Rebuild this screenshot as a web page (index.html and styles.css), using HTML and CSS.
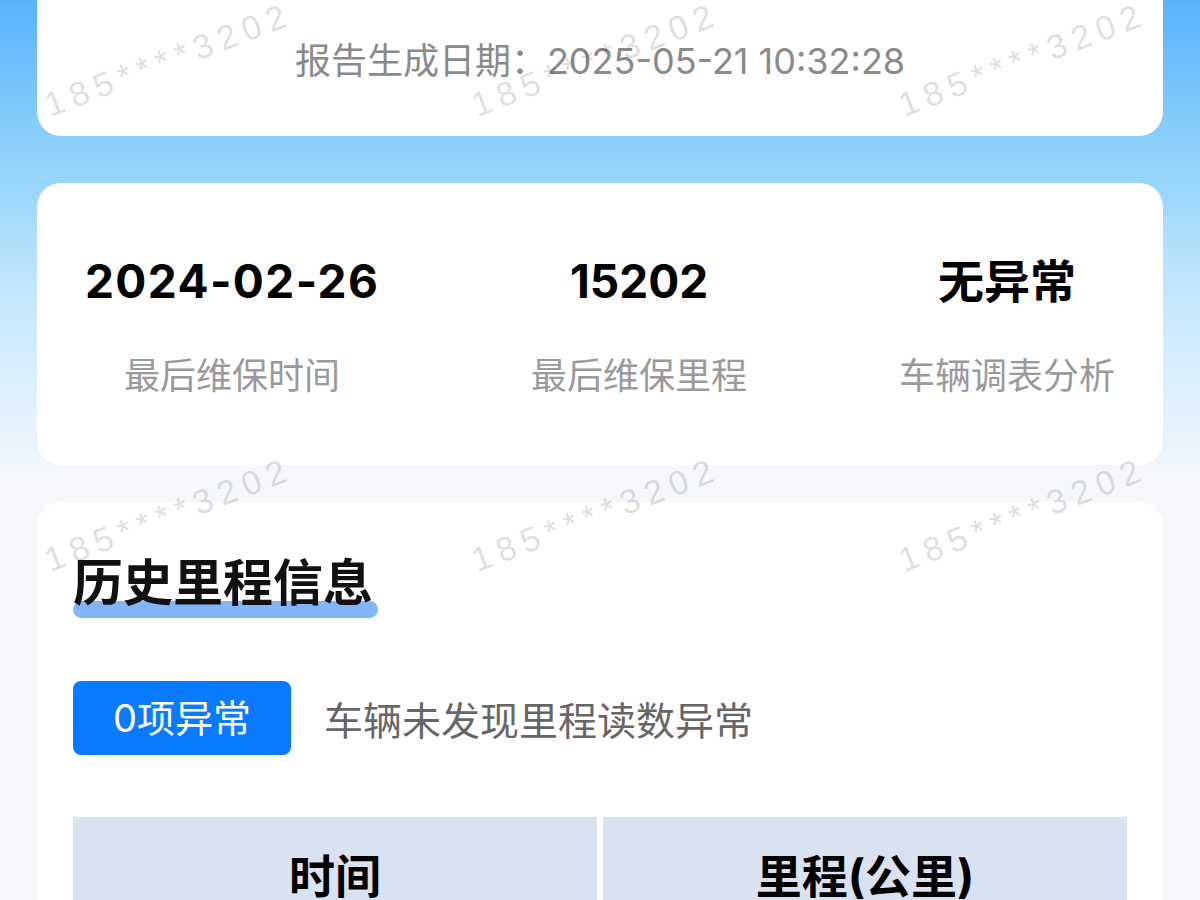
FILE: index.html
```html
<!DOCTYPE html>
<html lang="zh-CN">
<head>
<meta charset="utf-8">
<title>历史里程信息</title>
<link rel="stylesheet" href="styles.css">
</head>
<body>
<div class="page">
  <section class="hero">
    <div class="card card-date">报告生成日期：2025-05-21 10:32:28</div>
    <div class="card card-stats">
      <div class="stat">
        <div class="stat-value stat-date">2024-02-26</div>
        <div class="stat-label">最后维保时间</div>
      </div>
      <div class="stat">
        <div class="stat-value">15202</div>
        <div class="stat-label">最后维保里程</div>
      </div>
      <div class="stat">
        <div class="stat-value">无异常</div>
        <div class="stat-label">车辆调表分析</div>
      </div>
    </div>
  </section>

  <section class="card card-history">
    <h2 class="section-title"><span class="title-text">历史里程信息</span></h2>
    <div class="summary">
      <span class="badge">0项异常</span>
      <span class="summary-text">车辆未发现里程读数异常</span>
    </div>
    <div class="table">
      <div class="th">时间</div>
      <div class="th">里程(公里)</div>
    </div>
  </section>

  <div class="watermarks" aria-hidden="true">
    <span class="wm">185****3202</span>
    <span class="wm">185****3202</span>
    <span class="wm">185****3202</span>
    <span class="wm">185****3202</span>
    <span class="wm">185****3202</span>
    <span class="wm">185****3202</span>
  </div>
</div>
</body>
</html>
```

FILE: styles.css
```css
* {
  box-sizing: border-box;
}

html, body {
  margin: 0;
  padding: 0;
}

body {
  background: #f5f7fb;
  font-family: "Inter", "Noto Sans CJK SC", sans-serif;
  color: #111;
}

.page {
  position: relative;
  width: 1200px;
  min-height: 900px;
  overflow: hidden;
}

.hero {
  padding: 0 37px;
  background: linear-gradient(180deg, #5ab3fa 0px, #8dd1fb 150px, #c6e8fd 300px, #eff6fe 465px);
}

.card {
  background: #ffffff;
  border-radius: 24px;
}

.card-date {
  height: 136px;
  border-radius: 0 0 24px 24px;
  padding-top: 40px;
  text-align: center;
  font-size: 36px;
  line-height: 43px;
  color: #8a8a8a;
  margin-bottom: 47px;
}

.card-stats {
  height: 282px;
  display: flex;
  justify-content: space-between;
  padding: 71px 48px 0;
}

.stat {
  text-align: center;
}

.stat-value {
  font-size: 46px;
  line-height: 55px;
  font-weight: 700;
  color: #000;
}

.stat-date {
  letter-spacing: 1.4px;
}

.stat-label {
  margin-top: 46px;
  font-size: 36px;
  line-height: 43px;
  color: #9a9a9a;
}

.card-history {
  margin: 37px 37px 0;
  padding: 51px 36px 40px;
  min-height: 500px;
}

.section-title {
  margin: 0;
  font-size: 50px;
  line-height: 60px;
  font-weight: 700;
}

.title-text {
  position: relative;
  display: inline-block;
  z-index: 0;
  color: #111;
}

.title-text::after {
  content: "";
  position: absolute;
  left: 0;
  right: -5px;
  bottom: -5px;
  height: 17px;
  border-radius: 9px;
  background: #80b5f7;
  z-index: -1;
}

.summary {
  margin-top: 68px;
  display: flex;
  align-items: center;
}

.badge {
  height: 74px;
  padding: 0 40px;
  border-radius: 8px;
  background: #0a7bff;
  color: #fff;
  font-size: 38px;
  line-height: 74px;
  white-space: nowrap;
}

.summary-text {
  margin-left: 33px;
  font-size: 39px;
  color: #666;
}

.table {
  margin-top: 62px;
  display: grid;
  grid-template-columns: 1fr 1fr;
  column-gap: 6px;
}

.th {
  height: 112px;
  background: #d8e2f0;
  display: flex;
  align-items: center;
  justify-content: center;
  font-size: 46px;
  font-weight: 700;
  color: #000;
}

.watermarks {
  position: absolute;
  top: 0;
  left: 0;
  width: 1200px;
  height: 900px;
  pointer-events: none;
  display: grid;
  grid-template-columns: repeat(3, 427px);
  grid-auto-rows: 455px;
  padding: 88px 0 0 52px;
}

.wm {
  display: block;
  width: max-content;
  height: 34px;
  font-family: "Liberation Sans", sans-serif;
  font-size: 34px;
  line-height: 34px;
  letter-spacing: 7px;
  color: rgba(0, 0, 0, 0.15);
  transform: rotate(-21deg);
  transform-origin: left bottom;
}
```
